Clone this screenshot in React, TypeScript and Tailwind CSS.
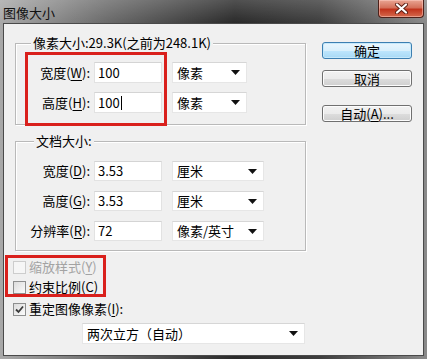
import React from "react";

const FONT = { fontFamily: '"Noto Sans CJK SC", "Noto Sans", sans-serif' };

function Mn({ children }: { children: React.ReactNode }) {
  return <span className="underline underline-offset-2">{children}</span>;
}

function Arrow() {
  return (
    <svg width="9" height="5" viewBox="0 0 9 5" className="shrink-0">
      <path d="M0 0 H9 L4.5 5 Z" fill="#111" />
    </svg>
  );
}

function TextBox({ value, w, caret }: { value: string; w: string; caret?: boolean }) {
  return (
    <div className={`${w} h-full bg-white border border-[#e2e2e2] border-t-[#d4d4d4] flex items-center pl-[3px]`}>
      <span>{value}</span>
      {caret && <span className="ml-[1px] w-px h-[14px] bg-black" />}
    </div>
  );
}

function Select({ value, w }: { value: string; w: string }) {
  return (
    <div className={`${w} h-full bg-white border border-[#e6e6e6] border-t-[#d6d6d6] flex items-center justify-between pl-[4px] pr-[6px]`}>
      <span>{value}</span>
      <Arrow />
    </div>
  );
}

function Row({ label, value, unit, unitW, caret }: { label: React.ReactNode; value: string; unit: string; unitW: string; caret?: boolean }) {
  return (
    <div className="flex items-center h-full">
      <div className="w-[76px] text-right pr-[2px]">{label}</div>
      <div className="ml-[2px] h-full">
        <TextBox value={value} w="w-[68px]" caret={caret} />
      </div>
      <div className="ml-[10px] h-full">
        <Select value={unit} w={unitW} />
      </div>
    </div>
  );
}

function Group({ title, titleLeft, height, children }: { title: string; titleLeft: string; height: string; children: React.ReactNode }) {
  return (
    <div className={`relative ml-[2px] w-[291px] ${height} border border-[#b9b9b9] shadow-[inset_1px_1px_0_#fff,1px_1px_0_#fff]`}>
      <div className={`absolute top-[-10px] ${titleLeft} bg-[#f0f0f0] px-[2px] leading-[18px]`}>{title}</div>
      {children}
    </div>
  );
}

function Check({ checked, disabled, children }: { checked?: boolean; disabled?: boolean; children: React.ReactNode }) {
  return (
    <div className={`flex items-center h-[20px] ${disabled ? "text-[#a3a3a3]" : "text-black"}`}>
      <div
        className={`w-[13px] h-[13px] border ${disabled ? "border-[#cdcdcd] bg-[#f6f6f6]" : "border-[#8e8f8f] bg-gradient-to-br from-[#dcdcdc] to-[#fbfbfb]"} flex items-center justify-center`}
      >
        {checked && (
          <svg width="9" height="9" viewBox="0 0 9 9">
            <path d="M1 4.5 L3.5 7 L8 1.5" stroke="#3a3a3a" strokeWidth="1.8" fill="none" />
          </svg>
        )}
      </div>
      <span className="ml-[3px]">{children}</span>
    </div>
  );
}

function Btn({ children, primary }: { children: React.ReactNode; primary?: boolean }) {
  return (
    <div
      className={`w-[90px] h-[17px] rounded-[3px] border flex items-center justify-center leading-none ${
        primary
          ? "border-[#3c7fb1] bg-[linear-gradient(#eaf6fd_0%,#d9f0fc_50%,#bee6fd_51%,#a7d9f5_100%)] shadow-[inset_0_0_0_1px_#c6e9fb]"
          : "border-[#707070] bg-[linear-gradient(#f2f2f2_0%,#ebebeb_50%,#dddddd_51%,#cfcfcf_100%)] shadow-[inset_0_0_0_1px_#fcfcfc]"
      }`}
    >
      {children}
    </div>
  );
}

export default function App() {
  return (
    <div
      className="w-[427px] h-[359px] overflow-hidden bg-[linear-gradient(90deg,#a8a8a8_0%,#6a6a6a_25%,#2a2a2a_55%,#3e3e3e_75%,#8a8a8a_100%)] text-[13px] text-black"
      style={FONT}
    >
      {/* title bar */}
      <div className="relative h-[23px] flex items-center pl-[3px] bg-[linear-gradient(rgba(255,255,255,0.18),rgba(255,255,255,0))]">
        <span className="text-[13px] text-[#111] leading-none pt-[1px]">图像大小</span>
        <div className="absolute top-0 right-[3px] w-[46px] h-[18px] rounded-b-[4px] border border-t-0 border-[#4e211a] bg-[linear-gradient(#e9a593_0%,#d4705a_45%,#c1331c_55%,#d56a4e_100%)] flex items-center justify-center shadow-[inset_0_0_0_1px_rgba(255,210,200,0.5)]">
          <svg width="13" height="11" viewBox="0 0 13 11">
            <path d="M2 1.5 L11 9.5 M11 1.5 L2 9.5" stroke="#5a1e14" strokeWidth="4" strokeLinecap="round" />
            <path d="M2 1.5 L11 9.5 M11 1.5 L2 9.5" stroke="#fff" strokeWidth="2.2" strokeLinecap="round" />
          </svg>
        </div>
      </div>

      {/* client area */}
      <div className="relative ml-[3px] w-[421px] h-[333px] border border-[#4a4a4a] bg-[#f0f0f0] flex">
        {/* left column */}
        <div className="w-[310px] pl-[9px] pt-[19px]">
          <Group title="像素大小:29.3K(之前为248.1K)" titleLeft="left-[15px]" height="h-[82px]">
            <div className="pt-[18px] flex flex-col gap-[9px]">
              <div className="h-[21px]">
                <Row label={<>宽度(<Mn>W</Mn>):</>} value="100" unit="像素" unitW="w-[75px]" />
              </div>
              <div className="h-[21px]">
                <Row label={<>高度(<Mn>H</Mn>):</>} value="100" unit="像素" unitW="w-[75px]" caret />
              </div>
            </div>
          </Group>

          <div className="mt-[16px]">
            <Group title="文档大小:" titleLeft="left-[18px]" height="h-[110px]">
              <div className="pt-[19px] flex flex-col gap-[10px]">
                <div className="h-[20px]">
                  <Row label={<>宽度(<Mn>D</Mn>):</>} value="3.53" unit="厘米" unitW="w-[92px]" />
                </div>
                <div className="h-[20px]">
                  <Row label={<>高度(<Mn>G</Mn>):</>} value="3.53" unit="厘米" unitW="w-[92px]" />
                </div>
                <div className="h-[20px]">
                  <Row label={<>分辨率(<Mn>R</Mn>):</>} value="72" unit="像素/英寸" unitW="w-[92px]" />
                </div>
              </div>
            </Group>
          </div>

          <div className="mt-[6px] flex flex-col">
            <Check disabled>
              缩放样式(<Mn>Y</Mn>)
            </Check>
            <Check>
              约束比例(<Mn>C</Mn>)
            </Check>
            <div className="mt-[2px]">
              <Check checked>
                重定图像像素(<Mn>I</Mn>):
              </Check>
            </div>
          </div>

          <div className="mt-[4px] ml-[69px] h-[21px]">
            <Select value="两次立方（自动）" w="w-[223px]" />
          </div>
        </div>

        {/* buttons */}
        <div className="pt-[18px] pl-[8px] flex flex-col">
          <Btn primary>确定</Btn>
          <div className="mt-[11px]">
            <Btn>取消</Btn>
          </div>
          <div className="mt-[18px]">
            <Btn>
              自动(<Mn>A</Mn>)...
            </Btn>
          </div>
        </div>

        {/* red highlight frames */}
        <div className="absolute left-[21px] top-[28px] w-[142px] h-[74px] border-[3px] border-[#d9201c]" />
        <div className="absolute left-[1px] top-[231px] w-[101px] h-[42px] border-[3px] border-[#d9201c]" />
      </div>
    </div>
  );
}
